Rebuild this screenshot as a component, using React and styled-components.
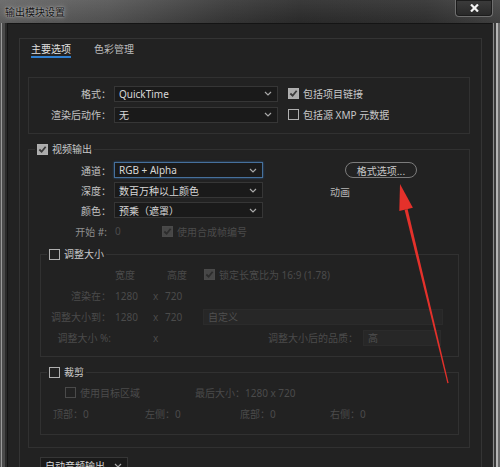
import React from "react";
import styled, { createGlobalStyle } from "styled-components";

const GlobalStyle = createGlobalStyle`
  html, body {
    margin: 0;
    padding: 0;
    background: #232323;
  }
  body {
    width: 500px;
    height: 467px;
    overflow: hidden;
    font-family: "Noto Sans", "Noto Sans CJK SC", sans-serif;
    font-size: 10px;
  }
  * { box-sizing: border-box; }
`;

const Window = styled.div`
  position: relative;
  width: 500px;
  height: 467px;
  overflow: hidden;
  display: flex;
  flex-direction: column;
  background: linear-gradient(90deg,
    #555 0 1px, #9a9a9a 1px 2px, #4a4a4a 2px 5px, #2a2a2a 5px 493px,
    #8a8a8a 493px 494px, #3a3a3a 494px 496px, #b5b5b5 496px 498px, #6a6a6a 498px 500px);
`;

const TitleBar = styled.div`
  height: 23px;
  flex: none;
  display: flex;
  align-items: flex-start;
  justify-content: space-between;
  padding-left: 5px;
  background:
    linear-gradient(180deg, rgba(255,255,255,0.06), rgba(0,0,0,0.1)),
    linear-gradient(90deg, #666 0, #575757 22%, #3a3a3a 45%, #2e2e2e 60%, #333 85%, #454545 100%);
`;

const Title = styled.span`
  margin-top: 6px;
  font-family: "Noto Sans CJK SC", sans-serif;
  font-size: 10px;
  line-height: 12px;
  color: #121212;
  text-shadow: 0 0 2px #cfcfcf, 0 0 6px #a8a8a8;
`;

const CloseButton = styled.div`
  width: 38px;
  height: 17px;
  margin-right: 7px;
  display: flex;
  align-items: center;
  justify-content: center;
  border: 1px solid #6f6f6f;
  border-top: none;
  border-radius: 0 0 4px 4px;
  background: linear-gradient(180deg, #3c3c3c, #282828);
  box-shadow: inset 0 0 0 1px #1c1c1c;
`;

const Body = styled.div`
  flex: 1;
  display: flex;
  flex-direction: column;
  margin: 0 8px 0 7px;
  background: #222;
  border-top: 1px solid #141414;
  border-left: 1px solid #141414;
`;

const TabPanel = styled.div`
  flex: 1;
  display: flex;
  flex-direction: column;
  margin: 14px 10px 0 11px;
  border: 1px solid #343434;
  border-bottom: none;
`;

const TabBar = styled.div`
  display: flex;
  gap: 23px;
  padding: 4px 0 0 11px;
`;

const Tab = styled.div`
  font-family: "Noto Sans CJK SC", sans-serif;
  line-height: 12px;
  padding-bottom: 1px;
  color: ${p => (p.$active ? "#e0e0e0" : "#bdbdbd")};
  border-bottom: 2px solid ${p => (p.$active ? "#2f7fd0" : "transparent")};
`;

const Content = styled.div`
  display: flex;
  flex-direction: column;
  padding: 0 11px 0 8px;
`;

const FormatBox = styled.div`
  margin-top: 19px;
  padding: 5px 0 8px 0;
  border: 1px solid #313131;
  display: flex;
  flex-direction: column;
`;

const Row = styled.div`
  display: flex;
  align-items: center;
  height: ${p => p.$h || 21}px;
`;

const Label = styled.span`
  flex: none;
  width: ${p => p.$w}px;
  padding-right: ${p => p.$pr || 3}px;
  text-align: right;
  white-space: nowrap;
  color: ${p => (p.$dim ? "#4b4b4b" : p.$mid ? "#8f8f8f" : "#c2c2c2")};
`;

const Text = styled.span`
  white-space: nowrap;
  color: ${p => (p.$dim ? "#4b4b4b" : p.$mid ? "#8f8f8f" : "#c4c4c4")};
`;

const SelectBox = styled.div`
  flex: none;
  width: ${p => p.$w}px;
  height: 16px;
  margin-left: ${p => p.$ml || 0}px;
  padding: 0 5px 0 4px;
  display: flex;
  align-items: center;
  justify-content: space-between;
  border: 1px solid ${p => (p.$focus ? "#46709c" : p.$dim ? "#2b2b2b" : "#363636")};
  background: ${p => (p.$dim ? "#272727" : "#1a1a1a")};
  color: ${p => (p.$dim ? "#505050" : "#d8d8d8")};
  white-space: nowrap;
  box-shadow: ${p => (p.$focus ? "0 0 2px #2d5b8c" : "none")};
`;

const Chevron = () => (
  <svg width="8" height="5" viewBox="0 0 8 5">
    <polyline points="1,1 4,4 7,1" fill="none" stroke="#a8a8a8" strokeWidth="1.2" />
  </svg>
);

const Select = ({ children, w, ml, focus, dim }) => (
  <SelectBox $w={w} $ml={ml} $focus={focus} $dim={dim}>
    <span>{children}</span>
    {!dim && <Chevron />}
  </SelectBox>
);

const Box = styled.span`
  flex: none;
  width: 11px;
  height: 11px;
  display: inline-flex;
  align-items: center;
  justify-content: center;
  border: 1.5px solid ${p => (p.$dim ? "#4a4a4a" : "#b0b0b0")};
  background: ${p => (p.$checked ? (p.$dim ? "#474747" : "#acacac") : "transparent")};
`;

const CheckRow = styled.span`
  display: inline-flex;
  align-items: center;
  gap: 4px;
  margin-left: ${p => p.$ml || 0}px;
  width: ${p => (p.$w ? `${p.$w}px` : "auto")};
  white-space: nowrap;
  color: ${p => (p.$dim ? "#4b4b4b" : "#c8c8c8")};
`;

const Checkbox = ({ checked, dim, children, ml, w }) => (
  <CheckRow $dim={dim} $ml={ml} $w={w}>
    <Box $checked={checked} $dim={dim}>
      {checked && (
        <svg width="9" height="9" viewBox="0 0 10 10">
          <polyline points="1.5,5 4,7.5 8.5,2" fill="none"
            stroke={dim ? "#2c2c2c" : "#3a3a3a"} strokeWidth="2" />
        </svg>
      )}
    </Box>
    {children}
  </CheckRow>
);

const Fieldset = styled.fieldset`
  margin: ${p => p.$m};
  padding: ${p => p.$p};
  min-width: 0;
  border: 1px solid #313131;
`;

const Legend = styled.legend`
  margin-left: 6px;
  padding: 0 2px;
  line-height: 12px;
  display: flex;
  align-items: center;
`;

const VideoTop = styled.div`
  display: flex;
  padding-top: 5px;
`;

const Column = styled.div`
  display: flex;
  flex-direction: column;
`;

const SideColumn = styled.div`
  display: flex;
  flex-direction: column;
  align-items: flex-start;
  padding-top: 2px;
  margin-left: 82px;
`;

const PillButton = styled.div`
  width: 72px;
  height: 16px;
  display: flex;
  align-items: center;
  justify-content: center;
  border: 1px solid #7c7c7c;
  border-radius: 8px;
  color: #c8c8c8;
  font-family: "Noto Sans CJK SC", sans-serif;
`;

const SideNote = styled.span`
  margin: 8px 0 0 -15px;
  line-height: 12px;
  color: #b8b8b8;
`;

const Value = styled.span`
  flex: none;
  width: ${p => p.$w}px;
  padding-left: 1px;
  color: #4b4b4b;
`;

const ResizeGrid = styled.div`
  display: grid;
  grid-template-columns: 73px 36px 12px 38px 1fr;
  grid-auto-rows: 21px;
  align-items: center;
  color: #4b4b4b;
  white-space: nowrap;
`;

const Cell = styled.span`
  padding-left: ${p => p.$pl || 0}px;
  padding-right: ${p => p.$pr || 0}px;
  text-align: ${p => p.$align || "left"};
  display: ${p => (p.$flex ? "flex" : "block")};
  align-items: center;
  justify-content: ${p => (p.$end ? "flex-end" : "flex-start")};
  gap: 5px;
`;

const CropGrid = styled.div`
  display: grid;
  grid-template-columns: 92px 95px 90px 1fr;
  height: 21px;
  align-items: center;
  padding-left: 12px;
  color: #4b4b4b;
  white-space: nowrap;
`;

const BottomSelect = styled.div`
  margin: 9px 0 0 12px;
`;

const ArrowLayer = styled.svg`
  position: absolute;
  inset: 0;
  pointer-events: none;
`;

export default function App() {
  return (
    <>
      <GlobalStyle />
      <Window>
        <TitleBar>
          <Title>输出模块设置</Title>
          <CloseButton>
            <svg width="9" height="8" viewBox="0 0 9 8">
              <path d="M1 0.5 L8 7.5 M8 0.5 L1 7.5" stroke="#f4f4f4" strokeWidth="2.2" />
            </svg>
          </CloseButton>
        </TitleBar>
        <Body>
          <TabPanel>
            <TabBar>
              <Tab $active>主要选项</Tab>
              <Tab>色彩管理</Tab>
            </TabBar>
            <Content>
              <FormatBox>
                <Row>
                  <Label $w={85}>格式：</Label>
                  <Select w={164}>QuickTime</Select>
                  <Checkbox checked ml={10}>包括项目链接</Checkbox>
                </Row>
                <Row>
                  <Label $w={85}>渲染后动作：</Label>
                  <Select w={164}>无</Select>
                  <Checkbox ml={10}>包括源 XMP 元数据</Checkbox>
                </Row>
              </FormatBox>

              <Fieldset $m="9px 0 0 0" $p="0 0 12px 0">
                <Legend>
                  <Checkbox checked>视频输出</Checkbox>
                </Legend>
                <VideoTop>
                  <Column>
                    <Row $h={20}>
                      <Label $w={85}>通道：</Label>
                      <Select w={149} focus>RGB + Alpha</Select>
                    </Row>
                    <Row $h={20}>
                      <Label $w={85}>深度：</Label>
                      <Select w={149}>数百万种以上颜色</Select>
                    </Row>
                    <Row $h={20}>
                      <Label $w={85}>颜色：</Label>
                      <Select w={149}>预乘（遮罩）</Select>
                    </Row>
                    <Row $h={22}>
                      <Label $w={85} $pr={7} $mid>开始 #:</Label>
                      <Value $w={48}>0</Value>
                      <Checkbox checked dim>使用合成帧编号</Checkbox>
                    </Row>
                  </Column>
                  <SideColumn>
                    <PillButton>格式选项...</PillButton>
                    <SideNote>动画</SideNote>
                  </SideColumn>
                </VideoTop>

                <Fieldset $m="6px 10px 0 11px" $p="4px 12px 8px 0">
                  <Legend>
                    <Checkbox>调整大小</Checkbox>
                  </Legend>
                  <ResizeGrid>
                    <Cell />
                    <Cell $pl={1}>宽度</Cell>
                    <Cell />
                    <Cell $pl={5}>高度</Cell>
                    <Cell $pl={4}>
                      <Checkbox checked dim>锁定长宽比为 16:9 (1.78)</Checkbox>
                    </Cell>

                    <Cell $align="right" $pr={3}>渲染在：</Cell>
                    <Cell $pl={1}>1280</Cell>
                    <Cell $pl={3}>x</Cell>
                    <Cell $pl={3}>720</Cell>
                    <Cell />

                    <Cell $align="right" $pr={3}>调整大小到：</Cell>
                    <Cell $pl={1}>1280</Cell>
                    <Cell $pl={3}>x</Cell>
                    <Cell $pl={3}>720</Cell>
                    <Cell $flex>
                      <Select w={240} ml={3} dim>自定义</Select>
                    </Cell>

                    <Cell $align="right" $pr={3}>调整大小 %:</Cell>
                    <Cell />
                    <Cell $pl={3}>x</Cell>
                    <Cell />
                    <Cell $flex $end $pr={5}>
                      <span>调整大小后的品质：</span>
                      <Select w={78} dim>高</Select>
                    </Cell>
                  </ResizeGrid>
                </Fieldset>

                <Fieldset $m="9px 10px 0 11px" $p="4px 0 10px 0">
                  <Legend>
                    <Checkbox>裁剪</Checkbox>
                  </Legend>
                  <Row>
                    <Checkbox dim ml={24} w={130}>使用目标区域</Checkbox>
                    <Text $dim>最后大小：1280 x 720</Text>
                  </Row>
                  <CropGrid>
                    <span>顶部：0</span>
                    <span>左侧：0</span>
                    <span>底部：0</span>
                    <span>右侧：0</span>
                  </CropGrid>
                </Fieldset>
              </Fieldset>

              <BottomSelect>
                <Select w={88}>自动音频输出</Select>
              </BottomSelect>
            </Content>
          </TabPanel>
        </Body>

        <ArrowLayer width="500" height="467" viewBox="0 0 500 467">
          <polygon points="404.6,209.7 407.6,209.0 448.6,383.1 447.4,383.3" fill="#e4312b" />
          <polygon points="400,184 412.9,207.7 399.3,210.9" fill="#e4312b" />
        </ArrowLayer>
      </Window>
    </>
  );
}
